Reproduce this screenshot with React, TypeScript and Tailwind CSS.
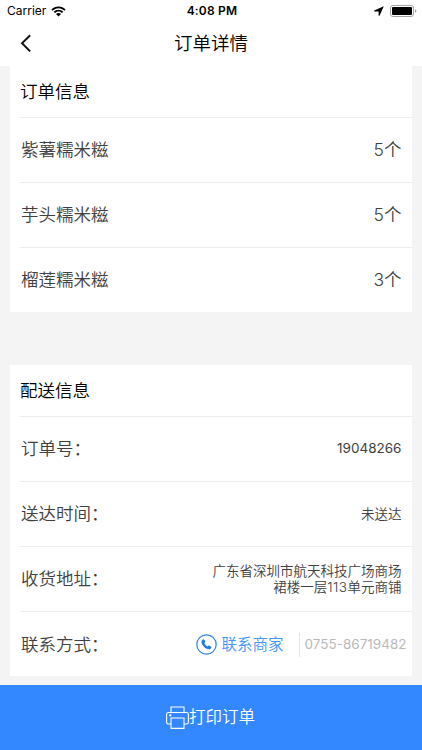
import type { ReactNode } from 'react'

const items = [
  { name: '紫薯糯米糍', count: 5 },
  { name: '芋头糯米糍', count: 5 },
  { name: '榴莲糯米糍', count: 3 },
]

function StatusBar() {
  return (
    <div className="grid h-[22px] grid-cols-3 items-center pl-[7px] pr-[5px] font-normal text-black">
      <div className="flex items-center gap-[5px]">
        <span className="text-[12px] leading-4">Carrier</span>
        <svg className="h-[11px] w-[15px]" viewBox="0 0 15 11" fill="currentColor">
          <path d="M7.5 0.5C4.7 0.5 2.2 1.6 0.4 3.4L1.7 4.7C3.2 3.2 5.3 2.3 7.5 2.3s4.3.9 5.8 2.4l1.3-1.3C12.8 1.6 10.3.5 7.5.5Z" />
          <path d="M7.5 3.7c-1.9 0-3.6.8-4.8 2L4 7c.9-.9 2.1-1.5 3.5-1.5S10.1 6.1 11 7l1.3-1.3c-1.2-1.2-2.9-2-4.8-2Z" />
          <path d="M7.5 6.9c-1 0-1.9.4-2.5 1l2.5 2.5L10 7.9c-.6-.6-1.5-1-2.5-1Z" />
        </svg>
      </div>
      <span className="text-center text-[12px] leading-4 font-semibold tracking-[0.2px]">4:08 PM</span>
      <div className="flex items-center justify-end gap-[6px]">
        <svg className="h-[10px] w-[10px]" viewBox="0 0 10 10" fill="currentColor">
          <path d="M9.8 0.2 0.2 4.5 0.2 5.4 4.6 5.4 4.6 9.8 5.5 9.8Z" />
        </svg>
        <svg className="h-[12px] w-[27px]" viewBox="0 0 27 12">
          <rect x="0.5" y="0.5" width="23" height="11" rx="2.5" fill="none" stroke="#a3a3a3" />
          <rect x="2" y="2" width="20" height="8" rx="1" fill="#000" />
          <path d="M25 4.2c.9.3 1.4 1 1.4 1.8S25.9 7.5 25 7.8Z" fill="#a3a3a3" />
        </svg>
      </div>
    </div>
  )
}

function Header() {
  return (
    <header className="h-[66px] bg-white">
      <StatusBar />
      <div className="grid h-[42px] grid-cols-[40px_1fr_40px] items-center">
        <button className="pl-5" aria-label="返回">
          <svg className="h-[18px] w-[12px]" viewBox="0 0 12 18" fill="none" stroke="#111" strokeWidth="1.9">
            <path d="M10.2 1.2 2 9.3l8.2 8.1" />
          </svg>
        </button>
        <h1 className="text-center text-[18.5px] leading-6 text-black">订单详情</h1>
      </div>
    </header>
  )
}

function Card({ title, children }: { title: string; children: ReactNode }) {
  return (
    <section className="ml-[10px] mr-[10.5px] bg-white pl-[10px]">
      <h2 className="flex h-[50.5px] items-center pt-[2px] text-[17.5px] text-black">{title}</h2>
      {children}
    </section>
  )
}

function Row({ label, children }: { label: string; children: ReactNode }) {
  return (
    <div className="flex h-[65.2px] items-center justify-between border-t border-[#ececec] pt-px pl-px pr-[10px]">
      <span className="text-[17.5px]">{label}</span>
      {children}
    </div>
  )
}

export default function App() {
  return (
    <div className="flex h-[750px] w-[422px] flex-col overflow-hidden bg-[#f4f4f4] font-['Inter','Noto_Sans_CJK_SC',sans-serif] font-[350] text-[#404040]">
      <Header />

      <main className="flex-1">
        <Card title="订单信息">
          {items.map((item) => (
            <Row key={item.name} label={item.name}>
              <span className="text-[17.5px]">{item.count}个</span>
            </Row>
          ))}
        </Card>

        <div className="h-[53px]" />

        <Card title="配送信息">
          <Row label="订单号：">
            <span className="pb-[2px] text-[13.5px] font-normal">19048266</span>
          </Row>
          <Row label="送达时间：">
            <span className="text-[13.5px]">未送达</span>
          </Row>
          <Row label="收货地址：">
            <p className="pb-px text-right text-[13.5px] leading-[16px]">
              广东省深圳市航天科技广场商场
              <br />
              裙楼一层<span className="tracking-[0.5px]">113</span>单元商铺
            </p>
          </Row>
          <Row label="联系方式：">
            <div className="-mr-[5px] flex items-center">
              <a className="flex items-center gap-[5px] text-[15.5px] text-[#4595f5]">
                <svg className="h-[21px] w-[21px]" viewBox="0 0 21 21" fill="none">
                  <circle cx="10.5" cy="10.5" r="9.7" stroke="#3385e8" strokeWidth="1.2" />
                  <path
                    d="M6.9 5.4c.5-.4 1-.2 1.3.3l.9 1.4c.3.5.2.9-.2 1.3l-.6.5c.4 1.4 1.9 2.9 3.4 3.5l.6-.6c.4-.4.8-.4 1.3-.1l1.4 1c.5.4.6.8.2 1.3-.7 1-1.8 1.4-3.1 1.1C8.9 14.300 6 11.300 5.500 8.200c-.2-1.200.4-2.200 1.400-2.800Z"
                    fill="#2378e6"
                  />
                </svg>
                联系商家
              </a>
              <span className="ml-[15px] h-6 w-px bg-[#e4e4e4]" />
              <span className="ml-[5px] pb-px text-[13.5px] font-normal text-[#bababa]">0755-86719482</span>
            </div>
          </Row>
        </Card>
      </main>

      <button className="flex h-[65.5px] items-center justify-center bg-[#3388ff] pr-px text-[16.5px] text-white">
        <svg className="h-[23px] w-[23px]" viewBox="0 0 23 23" fill="none" stroke="currentColor" strokeWidth="1.1">
          <path d="M5 6.5V1h13v5.5" />
          <path d="M5 18H2.5C1.3 18 .6 17.3.6 16.2V8.4c0-1.2.7-1.9 1.9-1.9h18c1.2 0 1.9.7 1.9 1.9v7.8c0 1.1-.7 1.8-1.9 1.8H18" />
          <path d="M5 12h13v10.4H5Z" />
          <rect x="3.3" y="8.3" width="2" height="2" fill="currentColor" stroke="none" />
        </svg>
        <span className="pt-px">打印订单</span>
      </button>
    </div>
  )
}
